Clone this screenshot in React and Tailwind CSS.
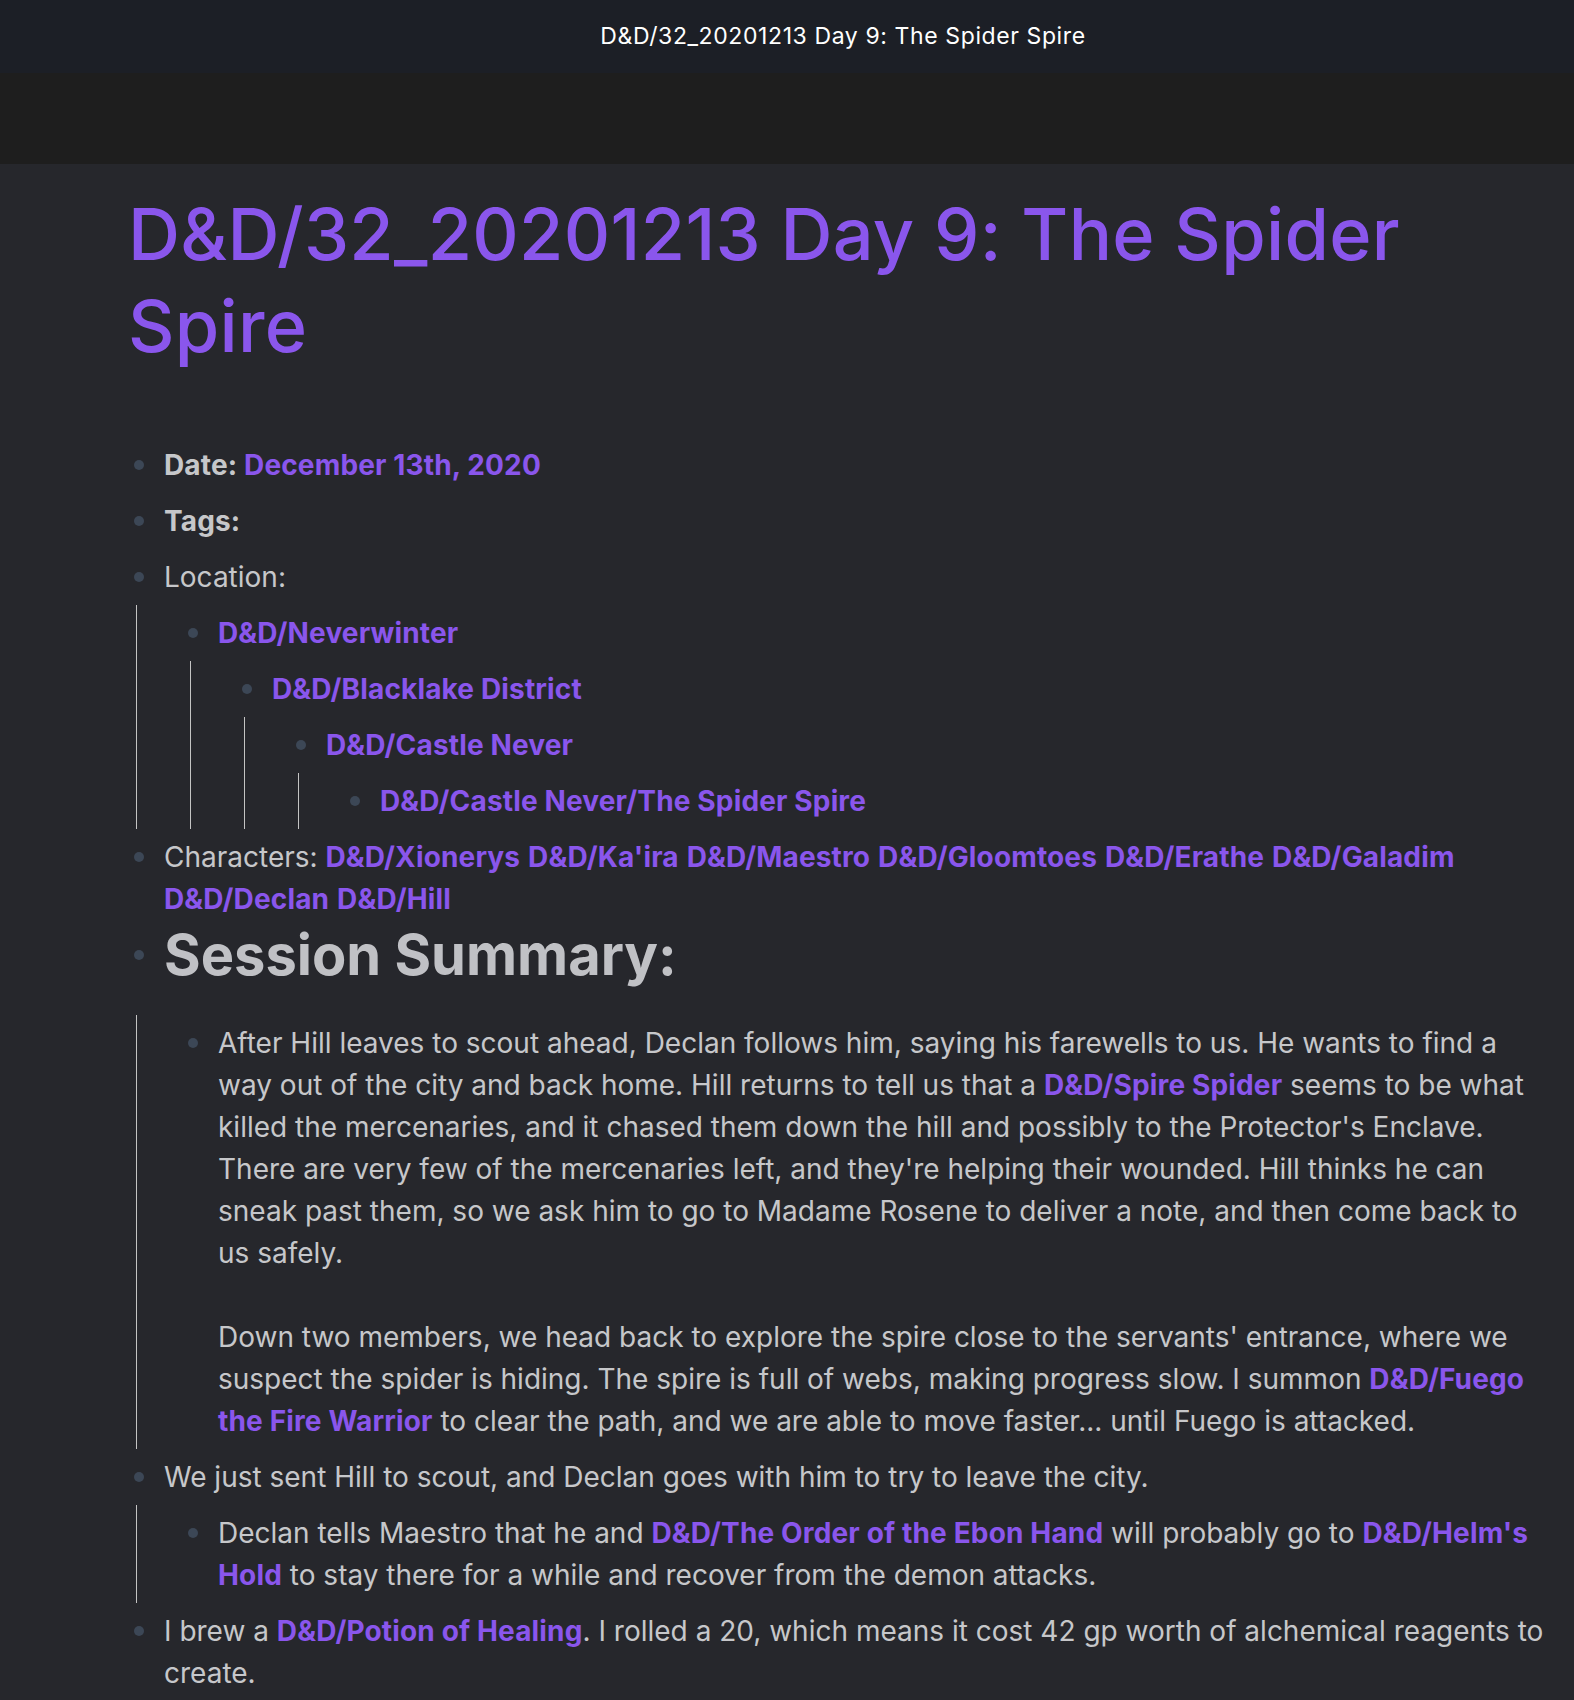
import React from "react";

const L = ({ children }) => (
  <span className="font-bold text-[#8a56ec] tracking-[0.15px]">{children}</span>
);

function Block({ children, kids, heading = false }) {
  return (
    <div>
      <div className={heading ? "flex pb-[32px]" : "flex py-[7px]"}>
        <div className={`w-[36px] shrink-0 flex items-center ${heading ? "h-[56px]" : "h-[42px]"}`}>
          <span className="ml-[6px] w-[10px] h-[10px] rounded-full bg-[#3c4756]" />
        </div>
        <div className="flex-1 min-w-0">{children}</div>
      </div>
      {kids && (
        <div className="ml-[8px] pl-[45px] border-l-[1.5px] border-[#c4c4c4]">
          {kids}
        </div>
      )}
    </div>
  );
}

export default function App() {
  return (
    <div className="min-h-[1700px] bg-[#26272c] text-[#c6c7ca]" style={{ fontFamily: "Inter, 'Noto Sans', sans-serif" }}>
      {/* barre de titre */}
      <div className="h-[73px] bg-[#1c1f26] flex items-center justify-center pl-[112px] text-white text-[23px] tracking-[0.6px]">
        D&amp;D/32_20201213 Day 9: The Spider Spire
      </div>
      <div className="h-[91px] bg-[#1e1e1e]" />

      <div className="pl-[128px] pr-[24px] pt-[24px]">
        <h1 className="text-[72px] leading-[92px] font-medium text-[#8a56ec] tracking-[0.3px] mb-[65px]">
          D&amp;D/32_20201213 Day 9: The Spider Spire
        </h1>

        <div className="text-[28px] leading-[42px]">
          <Block>
            <span className="font-bold tracking-[0.15px]">Date: </span>
            <L>December 13th, 2020</L>
          </Block>
          <Block>
            <span className="font-bold tracking-[0.15px]">Tags:</span>
          </Block>
          <Block
            kids={
              <Block
                kids={
                  <Block
                    kids={
                      <Block
                        kids={
                          <Block>
                            <L>D&amp;D/Castle Never/The Spider Spire</L>
                          </Block>
                        }
                      >
                        <L>D&amp;D/Castle Never</L>
                      </Block>
                    }
                  >
                    <L>D&amp;D/Blacklake District</L>
                  </Block>
                }
              >
                <L>D&amp;D/Neverwinter</L>
              </Block>
            }
          >
            Location:
          </Block>
          <Block>
            Characters: <L>D&amp;D/Xionerys</L> <L>D&amp;D/Ka'ira</L> <L>D&amp;D/Maestro</L>{" "}
            <L>D&amp;D/Gloomtoes</L> <L>D&amp;D/Erathe</L> <L>D&amp;D/Galadim</L>{" "}
            <L>D&amp;D/Declan</L> <L>D&amp;D/Hill</L>
          </Block>
          <Block
            heading
            kids={
              <Block>
                <p className="whitespace-pre-wrap">
                  After Hill leaves to scout ahead, Declan follows him, saying his farewells to us. He wants to find a way out of the city and back home. Hill returns to tell us that a <L>D&amp;D/Spire Spider</L> seems to be what killed the mercenaries, and it chased them down the hill and possibly to the Protector's Enclave. There are very few of the mercenaries left, and they're helping their wounded. Hill thinks he can sneak past them, so we ask him to go to Madame Rosene to deliver a note, and then come back to us safely.{"\n\n"}Down two members, we head back to explore the spire close to the servants' entrance, where we suspect the spider is hiding. The spire is full of webs, making progress slow. I summon <L>D&amp;D/Fuego the Fire Warrior</L> to clear the path, and we are able to move faster... until Fuego is attacked.
                </p>
              </Block>
            }
          >
            <h2 className="text-[56px] leading-[56px] font-bold text-[#c0c1c5]">Session Summary:</h2>
          </Block>
          <Block
            kids={
              <Block>
                Declan tells Maestro that he and <L>D&amp;D/The Order of the Ebon Hand</L> will probably go to{" "}
                <L>D&amp;D/Helm's Hold</L> to stay there for a while and recover from the demon attacks.
              </Block>
            }
          >
            We just sent Hill to scout, and Declan goes with him to try to leave the city.
          </Block>
          <Block>
            I brew a <L>D&amp;D/Potion of Healing</L>. I rolled a 20, which means it cost 42 gp worth of alchemical reagents to create.
          </Block>
        </div>
      </div>
    </div>
  );
}
